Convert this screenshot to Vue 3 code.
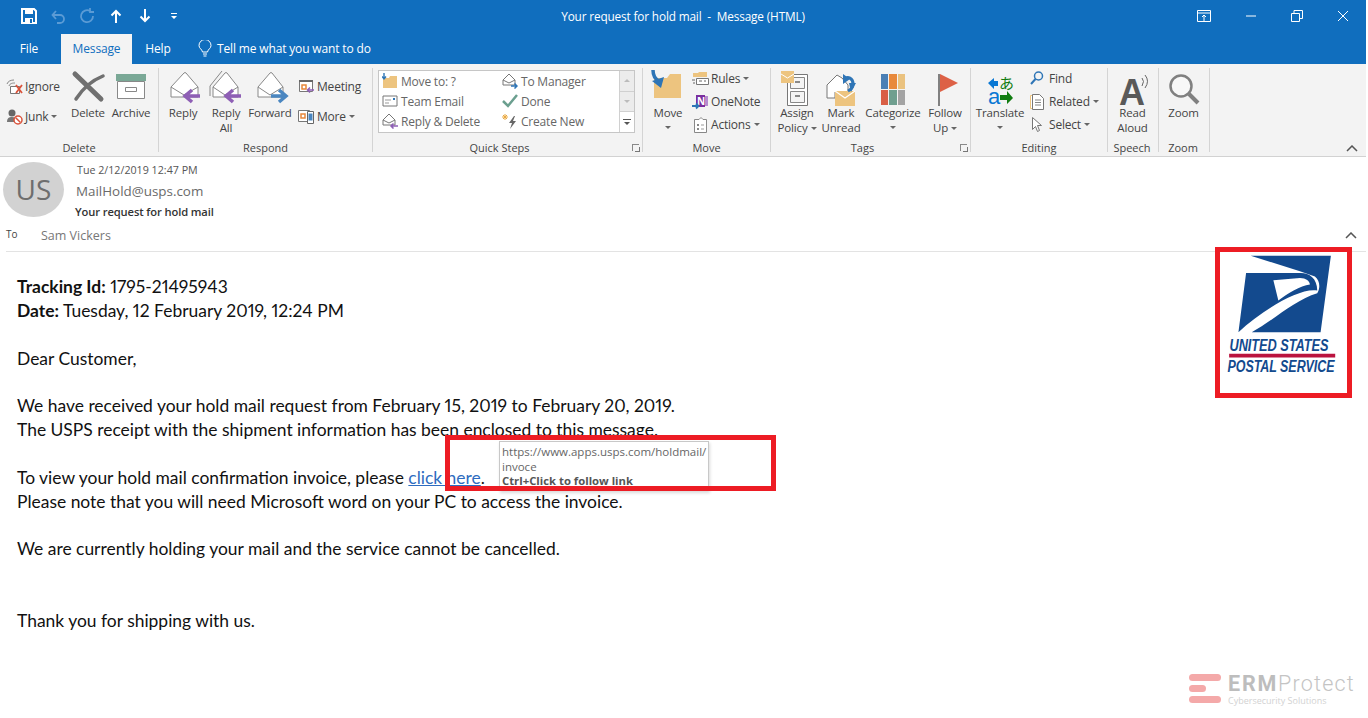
<script setup>
const paragraphs = [
  ['We have received your hold mail request from February 15, 2019 to February 20, 2019.', 'The USPS receipt with the shipment information has been enclosed to this message.']
]
</script>

<template>
  <div class="app">
    <header class="title-bar">
      <div class="qat">
        <svg class="qat-save" width="16" height="16" viewBox="0 0 16 16"><path d="M1 1h12l2 2v12H1z" fill="none" stroke="#fff" stroke-width="2"/><path d="M4 1h8v5H4zM4 10h8v5H4z" fill="#fff"/><path d="M9 11h2v4H9z" fill="#106ebe"/></svg>
        <svg class="qat-btn" width="16" height="16" viewBox="0 0 16 16"><path d="M3 7h7a4 4 0 0 1 0 8H7M6 3 2.500 7 6 11" fill="none" stroke="#5b9bd5" stroke-width="1.800"/></svg>
        <svg class="qat-btn" width="16" height="16" viewBox="0 0 16 16"><path d="M11 3a6 6 0 1 0 3 5M11 0v4h4" fill="none" stroke="#5b9bd5" stroke-width="1.800"/></svg>
        <svg class="qat-btn" width="16" height="16" viewBox="0 0 16 16"><path d="M8 15V3M3.500 7.500 8 3l4.500 4.500" fill="none" stroke="#fff" stroke-width="2"/></svg>
        <svg class="qat-btn" width="16" height="16" viewBox="0 0 16 16"><path d="M8 1v12M3.500 8.500 8 13l4.500-4.500" fill="none" stroke="#fff" stroke-width="2"/></svg>
        <svg class="qat-btn" width="16" height="16" viewBox="0 0 16 16"><path d="M5 5h6v1H5zM5 8h6l-3 3z" fill="#fff"/></svg>
      </div>
      <div class="doc-title">Your request for hold mail &nbsp;-&nbsp; Message (HTML)</div>
      <div class="win-btns">
        <svg width="14" height="12" viewBox="0 0 14 12"><path d="M.5.5h13v11H.5zM.5 3h13" fill="none" stroke="#fff"/><path d="M7 11V5M5 7l2-2 2 2" fill="none" stroke="#fff"/></svg>
        <svg width="12" height="12" viewBox="0 0 12 12"><path d="M1 6h10" stroke="#fff"/></svg>
        <svg width="12" height="12" viewBox="0 0 12 12"><path d="M.5 3.500h8v8h-8zM3 3.500v-3h8.500v8H8.500" fill="none" stroke="#fff"/></svg>
        <svg width="12" height="12" viewBox="0 0 12 12"><path d="m1 1 10 10M11 1 1 11" stroke="#fff"/></svg>
      </div>
    </header>

    <nav class="tabs">
      <span class="tab tab-file">File</span>
      <span class="tab tab-active">Message</span>
      <span class="tab tab-help">Help</span>
      <span class="tell-me">
        <svg width="14" height="17" viewBox="0 0 14 17"><path d="M4.500 12C4 9 1 8.500 1 5.500a6 6 0 0 1 12 0C13 8.500 10 9 9.500 12zM5 14h4M5.500 16h3" fill="none" stroke="#fff"/></svg>
        Tell me what you want to do
      </span>
    </nav>

    <section class="ribbon">
      <div class="group group-delete">
        <div class="group-body">
          <div class="small-col two-rows w-61">
            <div class="small">
              <svg width="17" height="17" viewBox="0 0 17 17"><path d="M1 6c1-3 4-4 7-4M3 8c1-3 4-3 6-3" fill="none" stroke="#888"/><path d="M4.500 8.500h9v7h-9z" fill="#fff" stroke="#777"/><path d="m10 7 6 8M16 7l-6 8" stroke="#d9533b" stroke-width="1.800"/></svg>
              <span>Ignore</span>
            </div>
            <div class="small">
              <svg width="17" height="17" viewBox="0 0 17 17"><circle cx="6" cy="5" r="3.500" fill="#666"/><path d="M1 14c0-4 2-5 5-5s4 1 4 2v3z" fill="#777"/><circle cx="12" cy="12" r="4" fill="#fff" stroke="#d9533b" stroke-width="1.500"/><path d="m9.500 9.500 5 5" stroke="#d9533b" stroke-width="1.500"/></svg>
              <span>Junk</span><i class="caret"></i>
            </div>
          </div>
          <div class="big w-42">
            <svg viewBox="0 0 38 38" width="38" height="38"><path d="M6 6 32 31" stroke="#707070" stroke-width="5" stroke-linecap="round"/><path d="M34 8C24 12 14 20 7 31" fill="none" stroke="#707070" stroke-width="3.500" stroke-linecap="round"/></svg>
            <span class="lbl">Delete</span>
          </div>
          <div class="big w-44">
            <svg viewBox="0 0 38 38" width="38" height="38"><path d="M5.500 13.500h27v17h-27z" fill="#fff" stroke="#888"/><path d="M4 6h30v7H4z" fill="#7aa896"/><path d="M13.500 19.500h11v4h-11z" fill="#fff" stroke="#888"/></svg>
            <span class="lbl">Archive</span>
          </div>
        </div>
        <div class="group-label">Delete</div>
      </div>

      <div class="group group-respond">
        <div class="group-body">
          <div class="big w-42">
            <svg viewBox="0 0 38 38" width="38" height="38"><path d="M7 19 20 5q1-1 2 0l12 14v10H7z" fill="#fff" stroke="#888"/><path d="m7 19 13 8 14-8" fill="none" stroke="#888"/><path d="M36 28H23M28 22l-7 6 7 6" fill="none" stroke="#8e5fb5" stroke-width="3.500"/></svg>
            <span class="lbl">Reply</span>
          </div>
          <div class="big w-44">
            <svg viewBox="0 0 38 38" width="38" height="38"><path d="M3 18 15 3M3 18v10" fill="none" stroke="#888"/><path d="M6 19 18 5q1-1 2 0l11 14v10H6z" fill="#fff" stroke="#888"/><path d="m6 19 12 8 13-8" fill="none" stroke="#888"/><path d="M34 28H21M26 22l-7 6 7 6" fill="none" stroke="#8e5fb5" stroke-width="3.500"/></svg>
            <span class="lbl">Reply<br>All</span>
          </div>
          <div class="big w-44">
            <svg viewBox="0 0 38 38" width="38" height="38"><path d="M7 19 19 5q1-1 2 0l11 14v10H7z" fill="#fff" stroke="#888"/><path d="m7 19 12 8 13-8" fill="none" stroke="#888"/><path d="M20 28h13M28 22l7 6-7 6" fill="none" stroke="#4a86c0" stroke-width="3.500"/></svg>
            <span class="lbl">Forward</span>
          </div>
          <div class="small-col two-rows pad-6">
            <div class="small">
              <svg width="17" height="17" viewBox="0 0 17 17"><path d="M1.500 2.500h13v11h-13z" fill="#fff" stroke="#777"/><path d="M1 2h14v2H1z" fill="#666"/><path d="M4 7h4v4H4z" fill="none" stroke="#e8873a" stroke-width="1.500"/><path d="M16 12h-6M12 9.500 9.500 12l2.500 2.500" fill="none" stroke="#8e5fb5" stroke-width="1.500"/></svg>
              <span>Meeting</span>
            </div>
            <div class="small">
              <svg width="17" height="17" viewBox="0 0 17 17"><path d="M.5 2.500h11v11H.5z" fill="#fff" stroke="#777"/><path d="M3 6h4v4H3z" fill="none" stroke="#e8873a" stroke-width="1.500"/><path d="M9.500 3.500h6v12h-6z" fill="#fff" stroke="#666"/><path d="M10.500 5.500h4v7h-4z" fill="#4a86c0"/></svg>
              <span>More</span><i class="caret"></i>
            </div>
          </div>
        </div>
        <div class="group-label">Respond</div>
      </div>

      <div class="group group-quick">
        <div class="group-body">
          <div class="quick-box">
            <div class="quick-list">
              <div class="quick-item">
                <svg width="16" height="16" viewBox="0 0 16 16"><path d="M1 5h6l1-2h7v12H1z" fill="#edc47f"/><path d="M2 0v5M0 3.500 2 6l2-2.500" fill="none" stroke="#2e75b6" stroke-width="1.400"/></svg>
                <span>Move to: ?</span>
              </div>
              <div class="quick-item">
                <svg width="16" height="16" viewBox="0 0 16 16"><path d="M1 3h14v10H1z" fill="#fff" stroke="#777"/><path d="M3 7h6M3 10h4" stroke="#999"/><path d="M11 5h2v2h-2z" fill="#2e75b6"/></svg>
                <span>Team Email</span>
              </div>
              <div class="quick-item">
                <svg width="16" height="16" viewBox="0 0 16 16"><path d="M1 7 7 1l6 6v5H1z" fill="#fff" stroke="#777"/><path d="m1 7 6 3 6-3" fill="none" stroke="#777"/><path d="M16 13H9M11.500 10.500 9 13l2.500 2.500" fill="none" stroke="#8e5fb5" stroke-width="1.500"/></svg>
                <span>Reply &amp; Delete</span>
              </div>
              <div class="quick-item">
                <svg width="16" height="16" viewBox="0 0 16 16"><path d="M1 7 7 1l6 6v5H1z" fill="#fff" stroke="#777"/><path d="m1 7 6 3 6-3" fill="none" stroke="#777"/><path d="M9 13h6M12.500 10.500 15 13l-2.500 2.500" fill="none" stroke="#2e75b6" stroke-width="1.500"/></svg>
                <span>To Manager</span>
              </div>
              <div class="quick-item">
                <svg width="16" height="16" viewBox="0 0 16 16"><path d="m1 8 5 5 9-11" fill="none" stroke="#6b9f8f" stroke-width="2.500"/></svg>
                <span>Done</span>
              </div>
              <div class="quick-item">
                <svg width="16" height="16" viewBox="0 0 16 16"><path d="M3 1v6M0 4h6M1 2l4 4M5 2 1 6" stroke="#eaa83f"/><path d="M12 3 7 10h3l-2 6 6-8h-3l2-5z" fill="#666"/></svg>
                <span>Create New</span>
              </div>
            </div>
            <div class="quick-scroll">
              <div class="scroll-btn"><i class="tri-up"></i></div>
              <div class="scroll-btn"><i class="tri-down"></i></div>
              <div class="scroll-btn scroll-more"><b></b><i class="tri-down dark"></i></div>
            </div>
          </div>
        </div>
        <div class="group-label has-launcher">Quick Steps<i class="launcher"></i></div>
      </div>

      <div class="group group-move">
        <div class="group-body">
          <div class="big w-44">
            <svg viewBox="0 0 38 38" width="38" height="38"><path d="M5 10h13l3-4h11v24H5z" fill="#edc47f"/><path d="M4 2c0 6 2 9 6 11" fill="none" stroke="#2e75b6" stroke-width="3.500"/><path d="M3 13l9 7 3-11z" fill="#2e75b6"/></svg>
            <span class="lbl">Move<i class="caret block"></i></span>
          </div>
          <div class="small-col three-rows pad-2">
            <div class="small">
              <svg width="17" height="17" viewBox="0 0 17 17"><path d="M1 3h5l1-1h8v5H1z" fill="#edc47f"/><path d="M4.500 8.500h12v6h-12z" fill="#fff" stroke="#777"/><path d="M0 10h3M1 13h2M7 11h3M12 11h2" stroke="#666"/></svg>
              <span>Rules</span><i class="caret"></i>
            </div>
            <div class="small">
              <svg width="17" height="17" viewBox="0 0 17 17"><path d="M4 2h9v12H4z" fill="#7a2e9e"/><text x="5" y="11.500" class="note-n">N</text><path d="M13 3h3v10h-3z" fill="#b68bd0"/><path d="M0 13h6M4 10.500 6.500 13 4 15.500" fill="none" stroke="#2e75b6" stroke-width="1.800"/></svg>
              <span>OneNote</span>
            </div>
            <div class="small">
              <svg width="17" height="17" viewBox="0 0 17 17"><path d="M2.500 3.500H7l2-2 2 2h3.500v13h-12z" fill="#fff" stroke="#888"/><path d="M5 8h2v2H5zM5 12h2v2H5z" fill="#888"/><path d="M9 9h3M9 13h3" stroke="#999"/></svg>
              <span>Actions</span><i class="caret"></i>
            </div>
          </div>
        </div>
        <div class="group-label">Move</div>
      </div>

      <div class="group group-tags">
        <div class="group-body">
          <div class="big w-44">
            <svg viewBox="0 0 38 38" width="38" height="38"><path d="M9.500 6.500h20v31h-20z" fill="#fff" stroke="#777"/><path d="M12.500 9.500h14v11h-14zM12.500 23.500h14v11h-14z" fill="#f4f4f4" stroke="#888"/><path d="M17 14h5M17 28h5" stroke="#666" stroke-width="1.500"/><path d="M3 3h13v12H3z" fill="#edc47f"/><path d="m3 6 6.500 4L16 6" fill="none" stroke="#fff"/></svg>
            <span class="lbl">Assign<br>Policy<i class="caret"></i></span>
          </div>
          <div class="big w-44">
            <svg viewBox="0 0 38 38" width="38" height="38"><path d="M5 17 15 7l5 3 6 7v7H13v6H5z" fill="#fff" stroke="#777"/><path d="M13 23h20v15H13z" fill="#edc47f"/><path d="m13 23 10 7 10-7" fill="none" stroke="#fff" stroke-width="1.200"/><path d="M22 11c4-3 9-1 9 5 0 2-1 5-5 7" fill="none" stroke="#2e75b6" stroke-width="3"/><path d="M21 6v10l7-5zM27 15h7l-5 9z" fill="#2e75b6"/></svg>
            <span class="lbl">Mark<br>Unread</span>
          </div>
          <div class="big w-60">
            <svg viewBox="0 0 38 38" width="38" height="38"><path d="M7 6h7v15H7z" fill="#4a7fb5"/><path d="M15 6h8v15h-8z" fill="#e8893c"/><path d="M24 6h7v15h-7z" fill="#eac27f"/><path d="M7 22h7v15H7z" fill="#d95f45"/><path d="M15 22h8v15h-8z" fill="#6f9f8f"/><path d="M24 22h7v15h-7z" fill="#a3a3a3"/></svg>
            <span class="lbl">Categorize<i class="caret block"></i></span>
          </div>
          <div class="big w-44">
            <svg viewBox="0 0 38 38" width="38" height="38"><path d="M12 6h2v32h-2z" fill="#808080"/><path d="M14 6 32 15 14 24z" fill="#dd6146"/></svg>
            <span class="lbl">Follow<br>Up<i class="caret"></i></span>
          </div>
        </div>
        <div class="group-label has-launcher">Tags<i class="launcher"></i></div>
      </div>

      <div class="group group-editing">
        <div class="group-body">
          <div class="big w-52">
            <svg viewBox="0 0 38 38" width="38" height="38"><path d="M7 15l6-5v3h4v5h-4v3z" fill="#0a78d4"/><text x="18" y="21" class="kana">あ</text><text x="7" y="36" class="latin">a</text><path d="M19 27h7v-4l6 7-6 6v-4h-7z" fill="#107c10"/></svg>
            <span class="lbl">Translate<i class="caret block"></i></span>
          </div>
          <div class="small-col three-rows pad-4">
            <div class="small">
              <svg class="icon-gap" width="14" height="17" viewBox="0 0 14 17"><circle cx="8.500" cy="6" r="4" fill="none" stroke="#2e75b6" stroke-width="1.500"/><path d="M5.500 9 1 14" stroke="#2e75b6" stroke-width="2"/></svg>
              <span>Find</span>
            </div>
            <div class="small">
              <svg class="icon-gap" width="14" height="17" viewBox="0 0 14 17"><path d="M.5 2.500H3v13H.5z" fill="#fff" stroke="#edc47f"/><path d="M2.500 1.500h7l4 4v11h-11z" fill="#fff" stroke="#777"/><path d="M5 7h6M5 9.500h6M5 12h6" stroke="#888"/></svg>
              <span>Related</span><i class="caret"></i>
            </div>
            <div class="small">
              <svg class="icon-gap" width="14" height="17" viewBox="0 0 14 17"><path d="M2.500 1.500v12l3-3 2 5 2-1-2-5h4z" fill="#fff" stroke="#777"/></svg>
              <span>Select</span><i class="caret"></i>
            </div>
          </div>
        </div>
        <div class="group-label">Editing</div>
      </div>

      <div class="group group-speech">
        <div class="group-body">
          <div class="big w-49">
            <svg viewBox="0 0 38 38" width="38" height="38"><text x="5" y="37" class="read-a">A</text><path d="M28 10q3 3 0 8M31 7q5 6 0 13" fill="none" stroke="#666"/></svg>
            <span class="lbl">Read<br>Aloud</span>
          </div>
        </div>
        <div class="group-label">Speech</div>
      </div>

      <div class="group group-zoom">
        <div class="group-body">
          <div class="big w-49">
            <svg viewBox="0 0 38 38" width="38" height="38"><circle cx="16" cy="18" r="10.500" fill="#fff" fill-opacity=".4" stroke="#808080" stroke-width="2.500"/><path d="m24 26 9 9" stroke="#808080" stroke-width="4"/></svg>
            <span class="lbl">Zoom</span>
          </div>
        </div>
        <div class="group-label">Zoom</div>
      </div>

      <svg class="collapse" width="12" height="8" viewBox="0 0 12 8"><path d="m1 6 5-5 5 5" fill="none" stroke="#555" stroke-width="1.500"/></svg>
    </section>

    <section class="msg-head">
      <div class="sender-row">
        <div class="avatar">US</div>
        <div class="sender-text">
          <div class="date">Tue 2/12/2019 12:47 PM</div>
          <div class="from">MailHold@usps.com</div>
          <div class="subject">Your request for hold mail</div>
        </div>
      </div>
      <div class="to-row">
        <span class="to-label">To</span>
        <span class="to-name">Sam Vickers</span>
        <svg class="to-collapse" width="12" height="8" viewBox="0 0 12 8"><path d="m1 6 5-5 5 5" fill="none" stroke="#555" stroke-width="1.500"/></svg>
      </div>
    </section>

    <main class="mail">
      <p><b>Tracking Id:</b> 1795-21495943<br><b>Date:</b> Tuesday, 12 February 2019, 12:24 PM</p>
      <p>Dear Customer,</p>
      <p v-for="(lines, i) in paragraphs" :key="i">{{ lines[0] }}<br>{{ lines[1] }}</p>
      <p>To view your hold mail confirmation invoice, please <a class="link">click here</a>.<br>Please note that you will need Microsoft word on your PC to access the invoice.</p>
      <p>We are currently holding your mail and the service cannot be cancelled.</p>
      <p class="thanks">Thank you for shipping with us.</p>
    </main>

    <div class="tooltip">
      <div class="tip-url">https://www.apps.usps.com/holdmail/</div>
      <div>invoce</div>
      <div class="tip-hint">Ctrl+Click to follow link</div>
    </div>
    <div class="mark mark-link"></div>

    <div class="mark mark-logo">
      <svg viewBox="60 52 381 421" width="127" height="140">
        <path d="M152 63h241l-31 230H155c60-31 130-98 197-117 10-16 8-38-7-50l-45-16z" fill="#134a8e"/>
        <path d="M138 115h160c27-2 54 13 54 53-52-10-162 57-237 125z" fill="#134a8e"/>
        <path d="M220 137l80-7c18 0 30 10 30 20-30 5-65 25-95 48z" fill="#fff"/>
        <text x="88" y="350" class="logo-text" textLength="298" lengthAdjust="spacingAndGlyphs">UNITED STATES</text>
        <path d="M87 358h319v11H87z" fill="#bb133e"/>
        <text x="82" y="412" class="logo-text" textLength="322" lengthAdjust="spacingAndGlyphs">POSTAL SERVICE</text>
      </svg>
    </div>

    <div class="watermark">
      <div class="wm-bars"><i></i><i class="short"></i><i></i></div>
      <div class="wm-text">
        <div class="wm-name"><b>ERM</b>Protect</div>
        <div class="wm-sub">Cybersecurity Solutions</div>
      </div>
    </div>
  </div>
</template>

<style>
html, body { margin: 0; background: #fff; }
</style>

<style scoped>
.app {
  position: relative;
  width: 1366px;
  height: 718px;
  overflow: hidden;
  background: #fff;
  font-family: "Open Sans", "Noto Sans", sans-serif;
  font-size: 11.5px;
  letter-spacing: -0.15px;
  color: #444;
}

.title-bar {
  display: grid;
  grid-template-columns: 1fr auto 1fr;
  align-items: center;
  height: 32px;
  background: #106ebe;
  color: #fff;
}
.qat { display: flex; align-items: center; padding-left: 21px; }
.qat-btn { margin-left: 13px; }
.doc-title { font-size: 11.8px; }
.win-btns { display: flex; justify-content: flex-end; gap: 34px; padding-right: 17px; align-items: center; }

.tabs {
  display: flex;
  align-items: flex-end;
  height: 32px;
  background: #106ebe;
  color: #fff;
  font-size: 12px;
}
.tab { display: flex; align-items: center; justify-content: center; height: 30px; padding-bottom: 2px; box-sizing: border-box; }
.tab-file { width: 58px; }
.tab-active { width: 71px; background: #f3f3f3; color: #106ebe; margin-left: 3px; }
.tab-help { width: 52px; }
.tell-me { display: flex; align-items: center; gap: 5px; height: 30px; margin-left: 14px; padding-bottom: 2px; box-sizing: border-box; }

.ribbon {
  display: flex;
  height: 93px;
  box-sizing: border-box;
  padding: 4px 0;
  background: #f3f3f3;
  border-bottom: 1px solid #d2d2d2;
  position: relative;
}
.group {
  display: flex;
  flex-direction: column;
  box-sizing: border-box;
  border-right: 1px solid #d4d4d4;
  flex: none;
}
.group-delete { width: 159px; }
.group-delete .group-body { padding-left: 6px; }
.group-respond { width: 214px; }
.group-respond .group-body { padding-left: 3px; }
.group-quick { width: 270px; }
.group-quick .group-body { padding-left: 5px; }
.group-move { width: 128px; }
.group-move .group-body { padding-left: 3px; }
.group-tags { width: 200px; }
.group-tags .group-body { padding-left: 4px; }
.group-editing { width: 137px; }
.group-editing .group-body { padding-left: 3px; }
.group-speech { width: 51px; }
.group-zoom { width: 51px; }

.group-body { flex: 1; display: flex; min-height: 0; }
.group-label {
  position: relative;
  height: 12px;
  line-height: 16px;
  text-align: center;
  font-size: 11px;
  letter-spacing: 0;
  color: #444;
}
.has-launcher { padding-right: 16px; }
.group-speech .group-label, .group-zoom .group-label { padding-right: 2px; }
.launcher {
  position: absolute;
  right: 3px;
  top: 4px;
  width: 6px;
  height: 6px;
  border: 1px solid #888;
  border-width: 1px 0 0 1px;
}
.launcher::after {
  content: "";
  position: absolute;
  right: -1px;
  bottom: -1px;
  width: 4px;
  height: 4px;
  border: 1px solid #777;
  border-width: 0 1px 1px 0;
}

.big { display: flex; flex-direction: column; align-items: center; flex: none; }
.big svg { display: block; flex: none; overflow: visible; }
.lbl { display: block; text-align: center; line-height: 15px; margin-top: -1px; white-space: nowrap; }
.lbl .caret { margin-left: 3px; }
.w-42 { width: 42px; }
.w-44 { width: 44px; }
.w-49 { width: 49px; }
.w-52 { width: 52px; }
.w-60 { width: 60px; }
.w-61 { width: 61px; }

.small-col { display: flex; flex-direction: column; flex: none; }
.two-rows { padding-top: 3px; }
.two-rows .small { height: 30px; }
.three-rows { margin-top: -1px; }
.three-rows .small { height: 23px; }
.pad-2 { padding-left: 2px; }
.pad-4 { padding-left: 4px; }
.pad-6 { margin-left: 6px; }
.small { display: flex; align-items: center; gap: 2px; white-space: nowrap; font-size: 12px; letter-spacing: -.2px; }
.small svg { flex: none; }
.small .icon-gap { margin-right: 3px; }

.caret {
  display: inline-block;
  width: 0;
  height: 0;
  margin-left: 1px;
  vertical-align: middle;
  border: 3px solid transparent;
  border-top-color: #666;
  border-bottom-width: 0;
}
.lbl .caret.block { display: block; margin: 6px auto 0; }

.quick-box {
  display: flex;
  width: 257px;
  height: 63px;
  margin-top: 2px;
  box-sizing: border-box;
  background: #fff;
  border: 1px solid #c6c6c6;
}
.quick-list {
  flex: 1;
  display: grid;
  grid-template-columns: 120px 1fr;
  grid-template-rows: repeat(3, 20px);
  grid-auto-flow: column;
  padding-left: 3px;
}
.quick-item { display: flex; align-items: center; gap: 3px; font-size: 12px; letter-spacing: -.2px; color: #666; white-space: nowrap; }
.quick-scroll { width: 14px; display: flex; flex-direction: column; border-left: 1px solid #d0d0d0; }
.scroll-btn {
  flex: 1;
  display: flex;
  flex-direction: column;
  gap: 2px;
  align-items: center;
  justify-content: center;
  background: #ececec;
  border-bottom: 1px solid #d0d0d0;
}
.scroll-more { background: #fff; border-bottom: 0; }
.scroll-more b { width: 8px; height: 1px; background: #555; }
.tri-up, .tri-down { width: 0; height: 0; border: 3px solid transparent; }
.tri-up { border-bottom-color: #bbb; border-top-width: 0; }
.tri-down { border-top-color: #bbb; border-bottom-width: 0; }
.tri-down.dark { border-top-color: #555; }

.note-n { font: bold 10px "Open Sans", sans-serif; fill: #fff; }
.kana { font: 15px "Noto Sans CJK JP", sans-serif; fill: #107c10; }
.latin { font: 22px "Liberation Sans", sans-serif; fill: #0a78d4; }
.read-a { font: bold 36px "Liberation Sans", sans-serif; fill: #595959; }

.collapse { position: absolute; right: 8px; bottom: 3px; }

.msg-head { padding-top: 5px; height: 95px; box-sizing: border-box; margin-left: 6px; border-bottom: 1px solid #e3e3e3; position: relative; }
.sender-row { display: flex; margin-left: -3px; }
.avatar {
  width: 61px;
  height: 55px;
  border-radius: 50%;
  background: #d2d2d2;
  color: #6e6e6e;
  font-size: 28px;
  line-height: 55px;
  text-align: center;
  flex: none;
  letter-spacing: 0;
}
.sender-text { padding-left: 12px; }
.date { font-size: 10.7px; line-height: 16px; letter-spacing: 0; color: #555; margin-left: 1px; }
.from { font-size: 13.4px; line-height: 20px; margin-top: 3px; letter-spacing: 0; color: #6a6a6a; }
.subject { font-size: 11.2px; line-height: 18px; margin: 2px 0 0 -1px; font-weight: 600; letter-spacing: -.12px; color: #333; }
.to-row { display: flex; align-items: center; margin-top: 4px; height: 20px; }
.to-label { width: 35px; font-size: 10px; letter-spacing: 0; color: #444; margin-top: -3px; }
.to-name { font-size: 12.5px; letter-spacing: 0; color: #777; }
.to-collapse { position: absolute; right: 9px; bottom: 11px; }

.mail {
  padding: 23px 0 0 17px;
  font-family: Lato, "Open Sans", sans-serif;
  font-size: 17.45px;
  font-variant-numeric: proportional-nums;
  line-height: 23.85px;
  letter-spacing: 0;
  color: #111;
}
.mail p { margin: 0 0 23.85px; }
.mail .thanks { margin-top: 47.7px; }
.link { color: #2e6cc0; text-decoration: underline; }

.tooltip {
  position: absolute;
  left: 499px;
  top: 441px;
  width: 210px;
  height: 50px;
  box-sizing: border-box;
  padding: 3px 0 0 2px;
  background: #fff;
  border: 1px solid #c8c8c8;
  box-shadow: 1px 2px 3px rgba(0, 0, 0, .15);
  font-size: 11.5px;
  line-height: 14.5px;
  letter-spacing: 0;
  color: #666;
  overflow: hidden;
  white-space: nowrap;
}
.tip-hint { font-weight: 700; color: #555; font-size: 11.3px; }

.mark { position: absolute; box-sizing: border-box; border: 5px solid #ed1c24; }
.mark-link { left: 445px; top: 435px; width: 331px; height: 56px; }
.mark-logo { left: 1215px; top: 247px; width: 137px; height: 151px; }
.mark-logo svg { display: block; overflow: visible; }
.logo-text { font: italic bold 50px "Liberation Sans", sans-serif; fill: #134a8e; }

.watermark {
  position: absolute;
  left: 1189px;
  top: 672px;
  display: flex;
  gap: 7px;
}
.wm-bars { display: flex; flex-direction: column; gap: 4px; width: 32px; padding-top: 2px; }
.wm-bars i { display: block; height: 7px; border-radius: 4px; background: #f4a9a9; }
.wm-bars i.short { width: 17px; }
.wm-name { font-size: 21.5px; line-height: 24px; font-family: Roboto, sans-serif; color: #c4c4c4; letter-spacing: 1.2px; font-weight: 300; }
.wm-name b { font-weight: 700; color: #bdbdbd; letter-spacing: 1.8px; }
.wm-sub { font-size: 9px; line-height: 10px; color: #d2d2d2; letter-spacing: 0; }
</style>
